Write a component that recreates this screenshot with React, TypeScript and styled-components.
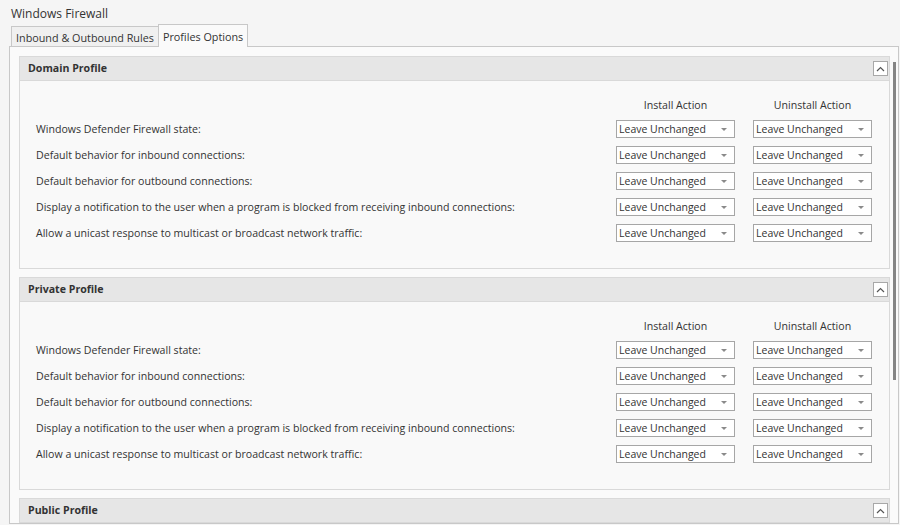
import React from "react";
import styled, { createGlobalStyle } from "styled-components";

const GlobalStyle = createGlobalStyle`
  html, body { margin: 0; padding: 0; background: #f5f5f5; }
  body { font-family: "Open Sans", "Noto Sans", sans-serif; color: #333; }
  * { box-sizing: border-box; }
`;

const Page = styled.div`
  width: 900px;
  height: 525px;
  padding: 5px 1px 1px 9px;
  display: flex;
  flex-direction: column;
  overflow: hidden;
  background: #f5f5f5;
`;

const Title = styled.div`
  font-size: 12px;
  line-height: 17px;
  height: 19px;
  padding-left: 2px;
  color: #333;
`;

const TabBar = styled.div`
  display: flex;
  align-items: flex-end;
  height: 23px;
  padding-left: 2px;
  position: relative;
  z-index: 1;
`;

const Tab = styled.div<{ $active?: boolean }>`
  font-size: 10.8px;
  color: #333;
  border: 1px solid #c8c8c8;
  border-bottom: none;
  display: flex;
  align-items: center;
  padding: 0 4px;
  background: ${(p) => (p.$active ? "#fafafa" : "#f0f0f0")};
  height: ${(p) => (p.$active ? "23px" : "20px")};
  margin-bottom: ${(p) => (p.$active ? "0" : "1px")};
  padding-top: 1px;
  ${(p) => (p.$active ? "" : "border-right: none;")}
`;

const Pane = styled.div`
  flex: 1;
  min-height: 0;
  margin-top: -1px;
  border: 1px solid #c8c8c8;
  background: #fafafa;
  display: flex;
`;

const Content = styled.div`
  flex: 1;
  min-width: 0;
  overflow: hidden;
  padding: 9px 0 0 9px;
  display: flex;
  flex-direction: column;
  gap: 8px;
`;

const ScrollTrack = styled.div`
  width: 8px;
  padding-top: 15px;
  display: flex;
  justify-content: center;
`;

const ScrollThumb = styled.div`
  width: 3px;
  height: 318px;
  background: #858585;
`;

const Section = styled.section`
  border: 1px solid #d9d9d9;
  flex-shrink: 0;
`;

const SectionHeader = styled.div`
  height: 24px;
  background: #e6e6e6;
  border-bottom: 1px solid #d9d9d9;
  display: flex;
  align-items: center;
  justify-content: space-between;
  padding: 0 1px 0 8px;
`;

const SectionTitle = styled.div`
  font-size: 10.6px;
  font-weight: 700;
  color: #333;
  padding-bottom: 2px;
`;

const CollapseButton = styled.div`
  width: 15px;
  height: 15px;
  background: #fff;
  border: 1px solid #a8a8a8;
  display: flex;
  align-items: center;
  justify-content: center;
`;

const SectionBody = styled.div`
  background: #f9f9f9;
  padding: 17px 17px 26px 16px;
  display: grid;
  grid-template-columns: 1fr 119px 119px;
  grid-auto-rows: 18px;
  grid-template-rows: 14px;
  column-gap: 18px;
  row-gap: 8px;
  align-items: center;
`;

const ColumnHeader = styled.div`
  font-size: 10.6px;
  color: #333;
  text-align: center;
  line-height: 14px;
`;

const Label = styled.div`
  font-size: 10.6px;
  color: #333;
  white-space: nowrap;
`;

const Select = styled.div`
  height: 18px;
  border: 1px solid #a6a6a6;
  background: #fff;
  display: flex;
  align-items: center;
  justify-content: space-between;
  padding: 0 7px 0 2px;
  font-size: 10.5px;
  color: #333;
`;

const Arrow = styled.span`
  width: 0;
  height: 0;
  border-left: 3px solid transparent;
  border-right: 3px solid transparent;
  border-top: 3px solid #8a8a8a;
`;

const rows = [
  "Windows Defender Firewall state:",
  "Default behavior for inbound connections:",
  "Default behavior for outbound connections:",
  "Display a notification to the user when a program is blocked from receiving inbound connections:",
  "Allow a unicast response to multicast or broadcast network traffic:",
];

const Chevron = () => (
  <svg width="9" height="6" viewBox="0 0 9 6">
    <polyline points="1,5 4.5,1.5 8,5" fill="none" stroke="#555" strokeWidth="1.2" />
  </svg>
);

const Dropdown = () => (
  <Select>
    <span>Leave Unchanged</span>
    <Arrow />
  </Select>
);

const Profile = ({ name, body = true }: { name: string; body?: boolean }) => (
  <Section>
    <SectionHeader>
      <SectionTitle>{name}</SectionTitle>
      <CollapseButton>
        <Chevron />
      </CollapseButton>
    </SectionHeader>
    {body && (
      <SectionBody>
        <div />
        <ColumnHeader>Install Action</ColumnHeader>
        <ColumnHeader>Uninstall Action</ColumnHeader>
        {rows.map((r) => (
          <React.Fragment key={r}>
            <Label>{r}</Label>
            <Dropdown />
            <Dropdown />
          </React.Fragment>
        ))}
      </SectionBody>
    )}
  </Section>
);

export default function App() {
  return (
    <>
      <GlobalStyle />
      <Page>
        <Title>Windows Firewall</Title>
        <TabBar>
          <Tab>Inbound &amp; Outbound Rules</Tab>
          <Tab $active>Profiles Options</Tab>
        </TabBar>
        <Pane>
          <Content>
            <Profile name="Domain Profile" />
            <Profile name="Private Profile" />
            <Profile name="Public Profile" body={false} />
          </Content>
          <ScrollTrack>
            <ScrollThumb />
          </ScrollTrack>
        </Pane>
      </Page>
    </>
  );
}
